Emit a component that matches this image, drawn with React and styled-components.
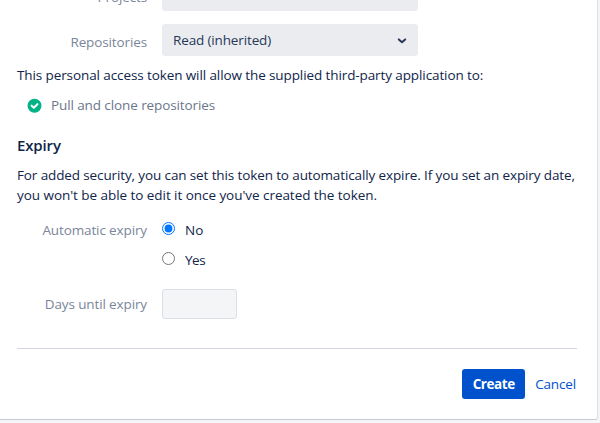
import React, { useState } from 'react'

import styled, { createGlobalStyle } from 'styled-components';

const GlobalStyle = createGlobalStyle`
  body {
    margin: 0;
    height: 423px;
    overflow: hidden;
    background: #f4f5f7;
    color: #10254a;
    font-family: "Open Sans", "Noto Sans", sans-serif;
    font-size: 13.5px;
    line-height: 20px;
  }
`

const Panel = styled.main`
  box-sizing: border-box;
  width: 598px;
  height: 420px;
  padding: 0 20px 0 17px;
  overflow: hidden;
  background: #fff;
  border-right: 1px solid #dcdfe6;
  border-bottom: 1px solid #c5cad6;
  border-bottom-right-radius: 3px;
`

const Text = styled.span`
  display: block;
  white-space: nowrap;
  letter-spacing: ${props => props.$spacing || 0}px;
`

const Field = styled.div`
  display: flex;
  align-items: ${props => props.$align || 'center'};
  height: ${props => props.$height}px;
  margin-top: ${props => props.$top || 0}px;
`

const Label = styled.span`
  width: 130px;
  margin-right: 15px;
  padding-top: ${props => props.$drop || 0}px;
  padding-bottom: ${props => props.$lift || 0}px;
  color: #7a869a;
  text-align: right;
  white-space: nowrap;
  letter-spacing: -0.12px;
`

const Select = styled.div`
  box-sizing: border-box;
  flex: none;
  display: flex;
  align-items: center;
  justify-content: space-between;
  width: 256px;
  height: 32px;
  padding: 0 11px 0 11px;
  border-radius: 3px;
  background: #ebecf0;
  color: #253858;
`

const Granted = styled.div`
  display: flex;
  align-items: center;
  gap: 9px;
  margin: 10px 0 0 10px;
  color: #6b778c;
`

const Heading = styled.h3`
  margin: 20px 0 10px;
  font-size: 15px;
  font-weight: 600;
  line-height: 20px;
  letter-spacing: -0.15px;
`

const Options = styled.div`
  display: flex;
  flex-direction: column;
  gap: 10px;
`

const Option = styled.label`
  display: flex;
  align-items: flex-start;
  gap: 10px;
  height: 20px;
`

const Radio = styled.input`
  width: 13px;
  height: 13px;
  margin: 2px 0 0;
`

const DaysInput = styled.input`
  box-sizing: border-box;
  width: 75px;
  height: 30px;
  border: 1px solid #dddfe8;
  border-radius: 3px;
  background: #f4f5f7;
`

const Actions = styled.div`
  display: flex;
  align-items: center;
  justify-content: flex-end;
  gap: 10px;
  margin-top: 29px;
  padding: 20px 1px 0 0;
  border-top: 1px solid #d5d5e4;
`

const CreateButton = styled.button`
  width: 63px;
  height: 30px;
  padding: 0;
  border: 0;
  border-radius: 3px;
  background: #0052cc;
  color: #fff;
  font: 700 13.5px "Open Sans", sans-serif;
  letter-spacing: -0.45px;
`

const CancelLink = styled.a`
  color: #0052cc;
  letter-spacing: -0.15px;
`

function Chevron() {
  return (
    <svg width="10" height="8" viewBox="0 0 10 8" fill="none">
      <path d="M1.8 3.4 5 6.2 8.2 3.4" stroke="#253858" strokeWidth="2" strokeLinecap="round" strokeLinejoin="round" />
    </svg>
  )
}

function Check() {
  return (
    <svg width="15" height="15" viewBox="0 0 15 15" fill="none">
      <circle cx="7.5" cy="7.8" r="7" fill="#00b386" />
      <path d="M4.6 7.7 6.8 9.7 10.4 6.2" stroke="#fff" strokeWidth="2.1" strokeLinecap="round" strokeLinejoin="round" />
    </svg>
  )
}

export default function App() {
  const [expires, setExpires] = useState(false)

  return (
    <>
      <GlobalStyle />
      <Panel>
        <Field $height={11} $align="flex-end">
          <Label $lift={4}>Projects</Label>
          <Select />
        </Field>
        <Field $height={32} $top={13}>
          <Label $drop={3}>Repositories</Label>
          <Select>
            <Text $spacing={-0.14}>Read (inherited)</Text>
            <Chevron />
          </Select>
        </Field>
        <Field $height={20} $top={9}>
          <Text $spacing={-0.1}>This personal access token will allow the supplied third-party application to:</Text>
        </Field>
        <Granted>
          <Check />
          <Text $spacing={-0.1}>Pull and clone repositories</Text>
        </Granted>
        <Heading>Expiry</Heading>
        <Text $spacing={-0.12}>For added security, you can set this token to automatically expire. If you set an expiry date,</Text>
        <Text $spacing={-0.05}>you won't be able to edit it once you've created the token.</Text>
        <Field $height={50} $top={15} $align="flex-start">
          <Label>Automatic expiry</Label>
          <Options>
            <Option>
              <Radio type="radio" name="expiry" checked={!expires} onChange={() => setExpires(false)} />
              <Text>No</Text>
            </Option>
            <Option>
              <Radio type="radio" name="expiry" checked={expires} onChange={() => setExpires(true)} />
              <Text $spacing={-0.5}>Yes</Text>
            </Option>
          </Options>
        </Field>
        <Field $height={30} $top={19}>
          <Label>Days until expiry</Label>
          <DaysInput disabled={!expires} />
        </Field>
        <Actions>
          <CreateButton>Create</CreateButton>
          <CancelLink>Cancel</CancelLink>
        </Actions>
      </Panel>
    </>
  )
}
